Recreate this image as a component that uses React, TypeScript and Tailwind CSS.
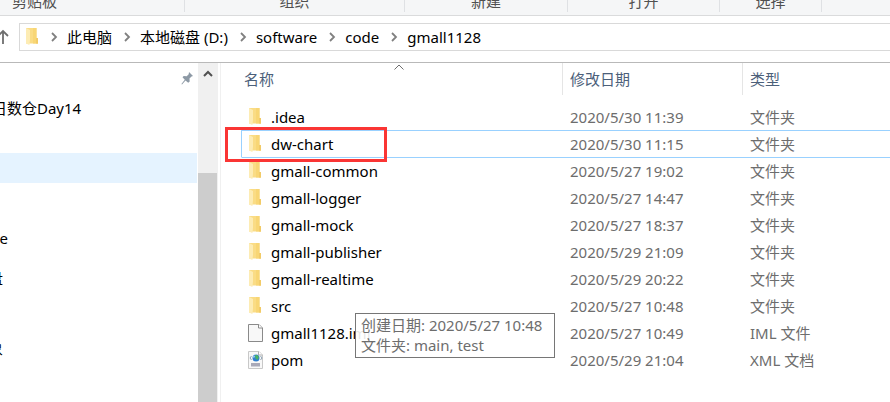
import React from 'react';
import clsx from 'clsx';

type FileKind = 'folder' | 'file' | 'xml';

interface FileEntry {
    name: string;
    modified: string;
    type: string;
    kind: FileKind;
}

const FILES: FileEntry[] = [
    { name: '.idea', modified: '2020/5/30 11:39', type: '文件夹', kind: 'folder' },
    { name: 'dw-chart', modified: '2020/5/30 11:15', type: '文件夹', kind: 'folder' },
    { name: 'gmall-common', modified: '2020/5/27 19:02', type: '文件夹', kind: 'folder' },
    { name: 'gmall-logger', modified: '2020/5/27 14:47', type: '文件夹', kind: 'folder' },
    { name: 'gmall-mock', modified: '2020/5/27 18:37', type: '文件夹', kind: 'folder' },
    { name: 'gmall-publisher', modified: '2020/5/29 21:09', type: '文件夹', kind: 'folder' },
    { name: 'gmall-realtime', modified: '2020/5/29 20:22', type: '文件夹', kind: 'folder' },
    { name: 'src', modified: '2020/5/27 10:48', type: '文件夹', kind: 'folder' },
    { name: 'gmall1128.iml', modified: '2020/5/27 10:49', type: 'IML 文件', kind: 'file' },
    { name: 'pom', modified: '2020/5/29 21:04', type: 'XML 文档', kind: 'xml' },
];

const SELECTED = 1;

const CRUMBS = ['此电脑', '本地磁盘 (D:)', 'software', 'code', 'gmall1128'];

function FolderIcon() {
    return (
        <svg width="14" height="18" viewBox="0 0 14 18" className="shrink-0" aria-hidden="true">
            <path d="M1 0h10.500v10H13v5.500H1z" fill="#fadc85" />
            <path d="M8 0h3.500v10H13v5.500H8z" fill="#f8d675" />
            <path d="M11 10h2v5.500h-2z" fill="#f2cb68" />
            <path d="M1 0l4 2v9.500l-.6 5.500L1 15.500z" fill="#fdecb4" />
        </svg>
    );
}

function FileIcon() {
    return (
        <svg width="15" height="18" viewBox="0 0 15 18" className="shrink-0" aria-hidden="true">
            <path d="M.5.5h10.500l3.500 3.500v13.500H.5z" fill="#f8f8f8" stroke="#8a8a8a" />
            <path d="M10.500.5v3.500h4" fill="#fff" stroke="#8a8a8a" />
        </svg>
    );
}

function XmlIcon() {
    return (
        <svg width="15" height="18" viewBox="0 0 15 18" className="shrink-0" aria-hidden="true">
            <path d="M.5.5h10.500l3.500 3.500v13.500H.5z" fill="#f8f8f8" stroke="#c8c8c8" />
            <path d="M10.500.5v3.500h4" fill="#fff" stroke="#b0b0b0" />
            <path d="M3.500 5L2 7l1.500 2M12.500 5L14 7l-1.500 2" fill="none" stroke="#8aa0b4" />
            <circle cx="8" cy="7" r="3.500" fill="#2f7fd0" />
            <path d="M7 4l3 .5.8 2-1.300 2.500-2-1.500z" fill="#4bb560" />
            <path d="M5 5.500l1.500-1 .5 1.500-1.500 1z" fill="#9fd3f5" />
            <path d="M3 12h9v3.500H3z" fill="#a9a9b8" />
        </svg>
    );
}

function EntryIcon({ kind }: { kind: FileKind }) {
    if (kind === 'folder') return <FolderIcon />;
    return kind === 'file' ? <FileIcon /> : <XmlIcon />;
}

function CrumbArrow() {
    return (
        <svg width="7" height="10" viewBox="0 0 7 10" className="shrink-0" aria-hidden="true">
            <path d="M1 1l4 4-4 4" fill="none" stroke="#808080" strokeWidth="1.8" />
        </svg>
    );
}

function Ribbon() {
    const group = 'flex h-3 items-end justify-center border-r border-[#dfe1e4] pb-px leading-5';

    return (
        <div className="grid h-4 grid-cols-[185px_220px_163px_152px_102px_1fr] overflow-hidden border-b border-[#dadbdc] bg-[#f5f6f7] text-[#505050]">
            <div className={clsx(group, 'justify-start pl-3')}>剪贴板</div>
            <div className={group}>组织</div>
            <div className={group}>新建</div>
            <div className={group}>打开</div>
            <div className={group}>选择</div>
        </div>
    );
}

function AddressBar() {
    return (
        <div className="flex items-center pt-[7px] pb-[11px]">
            <button type="button" aria-label="Up" className="-ml-1 mr-[9px] shrink-0">
                <svg width="14" height="16" viewBox="0 0 14 16" aria-hidden="true">
                    <path d="M7 15V2M2 7l5-5 5 5" fill="none" stroke="#6e6e6e" strokeWidth="1.8" />
                </svg>
            </button>
            <nav className="flex h-7 flex-1 items-center border-y border-l border-[#d9d9d9] pl-[5px]">
                <FolderIcon />
                {CRUMBS.map((crumb) => (
                    <React.Fragment key={crumb}>
                        <span className="ml-3 mr-[9px] flex">
                            <CrumbArrow />
                        </span>
                        <a href="#" className="whitespace-nowrap text-black">
                            {crumb}
                        </a>
                    </React.Fragment>
                ))}
            </nav>
        </div>
    );
}

function SideItem({ label }: { label: string }) {
    return (
        <div className="flex h-[30px] w-2 items-center justify-end whitespace-nowrap">
            <span>{label}</span>
        </div>
    );
}

function Sidebar() {
    return (
        <aside className="flex w-[221px] shrink-0 border-r border-[#f0f0f0]">
            <div className="flex-1 overflow-hidden text-black">
                <div className="flex h-[30px] items-center justify-end pr-[5px]">
                    <svg width="12" height="13" viewBox="0 0 12 13" aria-label="Pinned">
                        <path d="M8 0l4 4-1.500.5-2 2 .2 3-1.500 1.200L4.500 8.500 1 12.500l-.6-.6L3.800 7.800 1.500 5.200l1.200-1.200 3 .2 2-2z" fill="#8d99a5" />
                    </svg>
                </div>
                <div className="-ml-2 flex h-[30px] items-center whitespace-nowrap">日数仓Day14</div>
                <div className="mt-[30px] mr-px h-[30px] bg-[#e5f3ff]" />
                <div className="mt-10">
                    <SideItem label="OneDrive" />
                </div>
                <div className="mt-[10px] -ml-[5px]">
                    <SideItem label="WPS网盘" />
                </div>
                <div className="mt-10 -ml-[5px]">
                    <SideItem label="3D 对象" />
                </div>
            </div>
            <div className="mr-[2px] flex w-5 flex-col items-center bg-[#f0f0f0]">
                <svg width="10" height="7" viewBox="0 0 10 7" className="mt-[7px]" aria-hidden="true">
                    <path d="M1 6l4-4 4 4" fill="none" stroke="#505050" strokeWidth="2" />
                </svg>
                <div className="mt-24 mr-px w-[19px] flex-1 bg-[#cdcdcd]" />
            </div>
        </aside>
    );
}

function Tooltip() {
    return (
        <div
            role="tooltip"
            className="absolute left-[113px] top-5 z-10 w-[200px] whitespace-nowrap border border-[#767676] bg-white/90 px-[5px] pt-px pb-[2px] leading-5 text-[#6d6d6d]"
        >
            <div>创建日期: 2020/5/27 10:48</div>
            <div>文件夹: main, test</div>
        </div>
    );
}

function FileTable() {
    const heading = 'flex h-8 items-center border-r border-[#e5e5e5]';

    return (
        <table className="w-full table-fixed border-separate border-spacing-0 text-left">
            <thead className="text-[#4c607a]">
                <tr>
                    <th className="relative w-[322px] p-0 pb-2 font-normal">
                        <div className={clsx(heading, 'pl-[3px]')}>名称</div>
                        <svg width="10" height="6" viewBox="0 0 10 6" className="absolute left-[153px] top-px" aria-hidden="true">
                            <path d="M.5 5.500l4.500-4.500 4.500 4.500" fill="none" stroke="#6d6d6d" />
                        </svg>
                    </th>
                    <th className="w-[180px] p-0 pb-2 font-normal">
                        <div className={clsx(heading, 'pl-[7px]')}>修改日期</div>
                    </th>
                    <th className="p-0 pb-2 font-normal">
                        <div className="flex h-8 items-center pl-[7px]">类型</div>
                    </th>
                </tr>
            </thead>
            <tbody className="text-[#6d6d6d]">
                {FILES.map((file, i) => {
                    const line = i === SELECTED || i === SELECTED + 1 ? 'border-t-[#99d1ff]' : 'border-t-transparent';

                    return (
                        <tr key={file.name} className="h-[27px]">
                            <td
                                className={clsx(
                                    'relative border-l border-t p-0',
                                    line,
                                    i === SELECTED ? 'border-l-[#99d1ff]' : 'border-l-transparent',
                                )}
                            >
                                <div className="flex items-center pl-[6px] text-black">
                                    <span className="flex w-[23px]">
                                        <EntryIcon kind={file.kind} />
                                    </span>
                                    {file.name}
                                </div>
                                {i === SELECTED && (
                                    <div className="absolute -left-[17px] -top-1 z-10 h-[35px] w-[162px] border-3 border-[#fa3534]" />
                                )}
                                {file.name === 'src' && <Tooltip />}
                            </td>
                            <td className={clsx('border-t p-0 pl-[7px]', line)}>{file.modified}</td>
                            <td className={clsx('border-t p-0 pl-[7px]', line)}>{file.type}</td>
                        </tr>
                    );
                })}
            </tbody>
        </table>
    );
}

export default function App() {
    return (
        <div className="flex min-h-screen flex-col overflow-hidden bg-white font-['Noto_Sans','Noto_Sans_CJK_SC',sans-serif] text-[15px] leading-5">
            <Ribbon />
            <AddressBar />
            <div className="flex flex-1 border-t border-[#b9b9b9]">
                <Sidebar />
                <main className="flex-1 pl-5">
                    <FileTable />
                </main>
            </div>
        </div>
    );
}
